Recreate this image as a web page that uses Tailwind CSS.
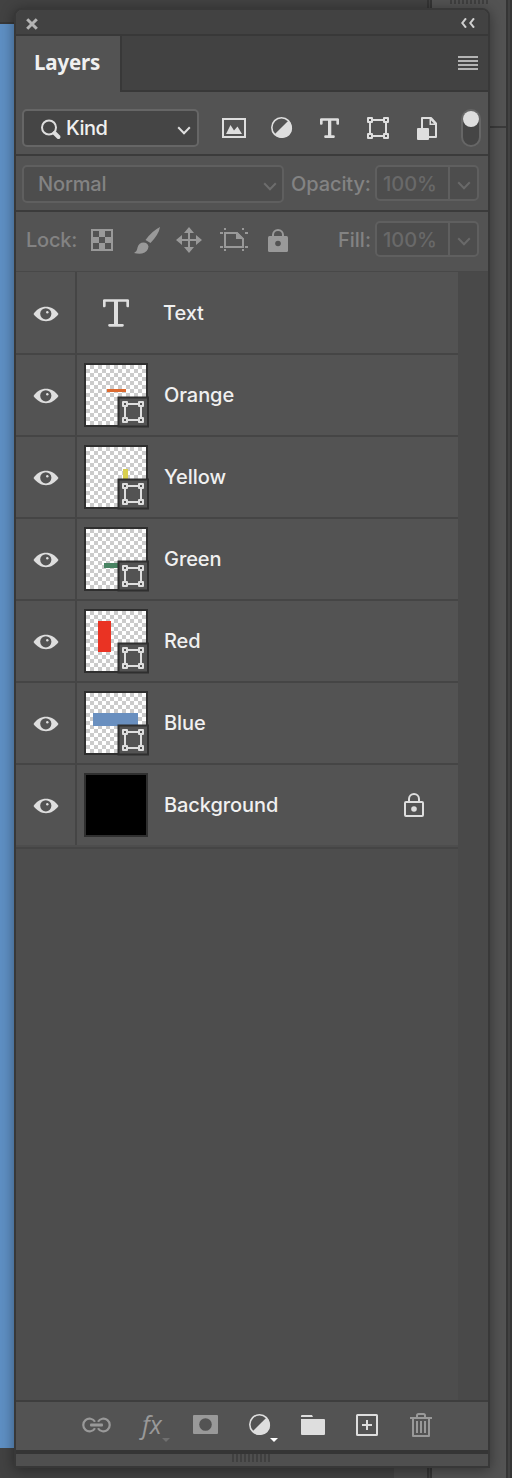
<!DOCTYPE html>
<html lang="en">
<head>
<meta charset="utf-8">
<title>Layers</title>
<script src="https://cdn.jsdelivr.net/npm/@tailwindcss/browser@4"></script>
</head>
<body class="relative h-[1478px] w-[512px] overflow-hidden bg-[#424242] text-[20px] font-medium" style="font-family:Inter,'Liberation Sans',sans-serif">

<!-- shared symbols -->
<svg class="absolute h-0 w-0">
  <symbol id="eye" viewBox="0 0 26 16">
    <path d="M.5 8C4 3.300 8 .8 13 .8S22 3.300 25.500 8C22 12.700 18 15.200 13 15.200S4 12.700.5 8Z" fill="#dedede"/>
    <circle cx="12.800" cy="7.800" r="5.600" fill="#535353"/><circle cx="14.300" cy="6.200" r="1.200" fill="#dedede"/>
  </symbol>
  <symbol id="shape" viewBox="0 0 22 22">
    <g fill="none" stroke="#dedede" stroke-width="2"><path d="M6 3H16M6 19H16M3 6V16M19 6V16"/><path d="M1 1H5V5H1ZM17 1H21V5H17ZM1 17H5V21H1ZM17 17H21V21H17Z" stroke-linejoin="round"/></g>
  </symbol>
  <symbol id="contrast" viewBox="0 0 22 22">
    <circle cx="10.500" cy="10.500" r="9.700" fill="none" stroke="#dedede" stroke-width="1.600"/><path d="M17.300 3.700A9.700 9.700 0 1 1 3.700 17.300Z" fill="#dedede"/>
  </symbol>
  <symbol id="typeT" viewBox="0 0 26 28">
    <path d="M1.300 7V1.500H24.700V7M6.500 26.300H19.500" fill="none" stroke="#dedede" stroke-width="2.700" stroke-linecap="round" stroke-linejoin="round"/><path d="M11 2H15V26H11Z" fill="#dedede"/>
  </symbol>
  <symbol id="chev" viewBox="0 0 14 9">
    <path d="M1.200 1.200 7 7.200 12.800 1.200" fill="none" stroke="currentColor" stroke-width="2"/>
  </symbol>
  <pattern id="checks" width="8" height="8" patternUnits="userSpaceOnUse"><path d="M0 0H8V8H0Z" fill="#fff"/><path d="M4 0H8V4H4ZM0 4H4V8H0Z" fill="#cbcbcb"/></pattern>
</svg>

<!-- workspace behind the panel -->
<div class="absolute inset-0 flex">
  <div class="flex w-[427px] flex-col">
    <div class="h-[22px]"></div>
    <div class="h-[1426px] border-t-2 border-[#383838] bg-[#5e8fc3]"></div>
    <div class="ml-[394px] mt-5 h-[10px] bg-[#4a4a4a]"></div>
  </div>
  <div class="w-[5px] border-x-2 border-[#353535] bg-[#424242]"></div>
  <div class="w-[74px] bg-[#535353]">
    <div class="ml-[18px] h-1 w-[38px] bg-[repeating-linear-gradient(90deg,#404040_0_2px,#535353_2px_4px)]"></div>
    <div class="mt-[122px] h-[2px] bg-[#3b3b3b]"></div>
  </div>
  <div class="w-1 border-l-2 border-[#353535] bg-[#424242]"></div>
  <div class="w-[2px] bg-[#353535]"></div>
</div>

<!-- panel -->
<div class="absolute left-[14px] top-2 flex h-[1460px] w-[476px] flex-col overflow-hidden rounded-t-[8px] border-2 border-[#383838] bg-[#535353] shadow-[0_2px_14px_rgba(0,0,0,0.4)]">
  <div class="flex h-[26px] shrink-0 items-center justify-between border-b-2 border-[#383838] bg-[#424242] pl-[10px] pr-[13px]">
    <svg class="mt-1 h-3 w-3" viewBox="0 0 12 12"><path d="M1.200 1.200 10.800 10.800M10.800 1.200 1.200 10.800" stroke="#b4b4b4" stroke-width="3"/></svg>
    <svg class="mt-[2px] h-[10px] w-[14px]" viewBox="0 0 14 10"><path d="M5 .3 1.300 5 5 9.700M13 .3 9.300 5 13 9.700" fill="none" stroke="#d0d0d0" stroke-width="2"/></svg>
  </div>
  <div class="flex h-14 shrink-0">
    <div class="w-[106px] border-r-2 border-[#383838] pl-[18px] pt-[12px] text-[20.500px] leading-[28px] font-bold tracking-[-0.150px] text-[#f0f0f0]" style="font-family:'Noto Sans',sans-serif">Layers</div>
    <div class="flex flex-1 justify-end border-b-2 border-[#383838] bg-[#424242] pr-[10px] pt-5">
      <div class="h-[14px] w-5 bg-[repeating-linear-gradient(180deg,#b4b4b4_0_2px,#424242_2px_4px)]"></div>
    </div>
  </div>

  <!-- filter row -->
  <div class="flex h-16 shrink-0 items-start border-b-2 border-[#3b3b3b] pl-[6px] pt-[17px]">
    <div class="flex h-[38px] w-[177px] items-center rounded-[5px] border-2 border-[#666] bg-[#454545] pl-[17px] pr-[6px] text-[#f0f0f0]">
      <svg class="mt-[2px] h-[21px] w-[21px]" viewBox="0 0 21 21"><circle cx="8" cy="8.500" r="7" fill="none" stroke="#dedede" stroke-width="2"/><path d="m13.500 14 4 4" stroke="#dedede" stroke-width="4" stroke-linecap="round"/></svg>
      <span class="ml-1 flex-1 tracking-[-0.500px]">Kind</span>
      <svg class="mt-1 h-[9px] w-[14px] text-[#dedede]"><use href="#chev"/></svg>
    </div>
    <div class="ml-[23px] flex h-[38px] items-center">
      <svg class="h-5 w-6" viewBox="0 0 24 20"><path d="M1 1H23V19H1Z" fill="none" stroke="#dedede" stroke-width="2"/><path d="M4 16 8.500 7 12 12.500 15.500 8.500 20 16Z" fill="#dedede"/></svg>
      <svg class="ml-[25px] h-[22px] w-[22px]"><use href="#contrast"/></svg>
      <svg class="ml-[27px] h-5 w-[19px]" viewBox="0 0 19 20"><path d="M1.300 5.500V1.500H17.700V5.500M5.500 18.700H13.500" fill="none" stroke="#dedede" stroke-width="2.700" stroke-linecap="round" stroke-linejoin="round"/><path d="M8 1H11.300V19H8Z" fill="#dedede"/></svg>
      <svg class="ml-7 h-[22px] w-[22px]"><use href="#shape"/></svg>
      <svg class="ml-7 mt-[1px] h-[23px] w-5" viewBox="0 0 20 23"><path d="M5 11V1H14L19 6.500V20H12" fill="none" stroke="#dedede" stroke-width="2" stroke-linejoin="round"/><path d="M12.500 1V8H19L19 6.500 14 1Z" fill="#dedede"/><path d="M14 3.500 17 6.500H14Z" fill="#535353"/><rect y="11" width="12" height="12" rx="1" fill="#dedede"/></svg>
    </div>
    <div class="ml-6 h-[38px] w-5 rounded-full border-2 border-[#666] bg-[#454545]"><div class="h-4 w-4 rounded-full bg-[#dedede]"></div></div>
  </div>

  <!-- blend row -->
  <div class="flex h-14 shrink-0 items-start border-b-2 border-[#3b3b3b] pl-[6px] pt-[9px] text-[#838383]">
    <div class="flex h-[38px] w-[262px] items-center justify-between rounded-[5px] border-2 border-[#5f5f5f] bg-[#4d4d4d] pl-[14px] pr-[5px]">
      <span class="tracking-[-0.150px]">Normal</span><svg class="mt-1 h-[9px] w-[14px] text-[#6d6d6d]"><use href="#chev"/></svg>
    </div>
    <div class="w-[91px] pl-[7px] leading-[38px] tracking-[-0.100px]">Opacity:</div>
    <div class="flex h-9 w-[104px] rounded-[5px] border-2 border-[#5f5f5f] bg-[#4d4d4d] text-[#696969]">
      <div class="w-[73px] border-r-2 border-[#5f5f5f] pl-[6px] leading-[34px]">100%</div>
      <svg class="ml-[7px] mt-[14px] h-[9px] w-[14px]"><use href="#chev"/></svg>
    </div>
  </div>

  <!-- lock row -->
  <div class="flex h-[60px] shrink-0 items-start border-b border-[#484848] pl-[10px] pt-[9px] text-[#838383]">
    <div class="w-[65px] leading-[38px] tracking-[-0.200px]">Lock:</div>
    <div class="flex h-[38px] items-center">
      <svg class="h-[22px] w-[22px]" viewBox="0 0 22 22"><path d="M1 1H21V21H1Z" fill="none" stroke="#999" stroke-width="2"/><path d="M8 2H14V8H8ZM2 8H8V14H2ZM14 8H20V14H14ZM8 14H14V20H8Z" fill="#999"/></svg>
      <svg class="ml-[21px] h-[27px] w-[26px]" viewBox="0 0 26 27"><path d="M26 0Q25 7 16.500 16L11.500 13Q18 4 26 0Z" fill="#999"/><path d="M9.500 15.500Q13.500 15.500 14.500 19.500 14 25 8 26.500 4 27 0 26 3 24.500 3.500 20.500 5 15.500 9.500 15.500Z" fill="#999"/></svg>
      <svg class="ml-4 h-[26px] w-[26px]" viewBox="0 0 26 26"><path d="M13 4V22M4 13H22" stroke="#999" stroke-width="2"/><path d="M13 0 18 6H8ZM13 26 18 20H8ZM0 13 6 8V18ZM26 13 20 8V18Z" fill="#999"/></svg>
      <svg class="ml-[18px] h-6 w-7" viewBox="0 0 28 24"><path d="M5 5H17L23 11V19H5Z" fill="none" stroke="#999" stroke-width="2"/><path d="M16 4V11H24L17 4Z" fill="#999"/><path d="M4 0H6V2H4ZM22 0H24V2H22ZM0 4H3V6H0ZM25 4H28V6H25ZM0 18H3V20H0ZM25 18H28V20H25ZM4 21H6V23H4ZM22 21H24V23H22Z" fill="#999"/></svg>
      <svg class="ml-5 h-[23px] w-5" viewBox="0 0 20 23"><path d="M5 8V6A5 5 0 0 1 15 6V8" fill="none" stroke="#999" stroke-width="2"/><rect y="7" width="20" height="16" rx="1.500" fill="#999"/><circle cx="10" cy="14.500" r="2.800" fill="#535353"/></svg>
    </div>
    <div class="ml-[50px] w-[37px] leading-[38px]">Fill:</div>
    <div class="flex h-9 w-[104px] rounded-[5px] border-2 border-[#5f5f5f] bg-[#4d4d4d] text-[#696969]">
      <div class="w-[73px] border-r-2 border-[#5f5f5f] pl-[6px] leading-[34px]">100%</div>
      <svg class="ml-[7px] mt-[14px] h-[9px] w-[14px]"><use href="#chev"/></svg>
    </div>
  </div>

  <!-- layer list -->
  <div class="flex flex-1 bg-[#494949]">
    <div class="w-[442px] bg-[#4d4d4d] tracking-[-0.070px] text-[#f0f0f0]">
      <div class="flex h-[83px] items-stretch border-b-2 border-[#454545] bg-[#535353]">
        <div class="flex w-[61px] items-center border-r-2 border-[#454545] pl-[17px] pt-[2px]"><svg class="h-4 w-[26px]"><use href="#eye"/></svg></div>
        <div class="flex flex-1 items-center"><svg class="ml-[26px] mt-[1px] h-7 w-[26px]"><use href="#typeT"/></svg><span class="ml-[34px] mt-[1px]">Text</span></div>
      </div>
      <div class="flex h-[82px] border-b-2 border-[#454545] bg-[#535353]">
        <div class="flex w-[61px] items-center border-r-2 border-[#454545] pl-[17px] pt-[1px]"><svg class="h-4 w-[26px]"><use href="#eye"/></svg></div>
        <div class="flex flex-1 items-center"><svg class="ml-[7px] mt-[2px] h-[66px] w-[66px]" viewBox="0 0 66 66"><path d="M1 1H63V63H1Z" fill="#2f2f2f" stroke="#2f2f2f" stroke-width="2"/><svg x="2" y="2" width="60" height="60"><rect width="60" height="60" fill="url(#checks)"/><rect x="21" y="24" width="19" height="3" fill="#dc6a30"/></svg><path d="M34.500 34.500H64V63.500H34.500Z" fill="#535353" stroke="#2f2f2f" stroke-width="2"/><use href="#shape" x="38" y="38" width="22" height="22"/></svg><span class="ml-[14px]">Orange</span></div>
      </div>
      <div class="flex h-[82px] border-b-2 border-[#454545] bg-[#535353]">
        <div class="flex w-[61px] items-center border-r-2 border-[#454545] pl-[17px] pt-[1px]"><svg class="h-4 w-[26px]"><use href="#eye"/></svg></div>
        <div class="flex flex-1 items-center"><svg class="ml-[7px] mt-[2px] h-[66px] w-[66px]" viewBox="0 0 66 66"><path d="M1 1H63V63H1Z" fill="#2f2f2f" stroke="#2f2f2f" stroke-width="2"/><svg x="2" y="2" width="60" height="60"><rect width="60" height="60" fill="url(#checks)"/><rect x="37" y="22" width="5" height="12" fill="#d8cf4e"/></svg><path d="M34.500 34.500H64V63.500H34.500Z" fill="#535353" stroke="#2f2f2f" stroke-width="2"/><use href="#shape" x="38" y="38" width="22" height="22"/></svg><span class="ml-[14px]">Yellow</span></div>
      </div>
      <div class="flex h-[82px] border-b-2 border-[#454545] bg-[#535353]">
        <div class="flex w-[61px] items-center border-r-2 border-[#454545] pl-[17px] pt-[1px]"><svg class="h-4 w-[26px]"><use href="#eye"/></svg></div>
        <div class="flex flex-1 items-center"><svg class="ml-[7px] mt-[2px] h-[66px] w-[66px]" viewBox="0 0 66 66"><path d="M1 1H63V63H1Z" fill="#2f2f2f" stroke="#2f2f2f" stroke-width="2"/><svg x="2" y="2" width="60" height="60"><rect width="60" height="60" fill="url(#checks)"/><rect x="18" y="34" width="16" height="5" fill="#488362"/></svg><path d="M34.500 34.500H64V63.500H34.500Z" fill="#535353" stroke="#2f2f2f" stroke-width="2"/><use href="#shape" x="38" y="38" width="22" height="22"/></svg><span class="ml-[14px]">Green</span></div>
      </div>
      <div class="flex h-[82px] border-b-2 border-[#454545] bg-[#535353]">
        <div class="flex w-[61px] items-center border-r-2 border-[#454545] pl-[17px] pt-[1px]"><svg class="h-4 w-[26px]"><use href="#eye"/></svg></div>
        <div class="flex flex-1 items-center"><svg class="ml-[7px] mt-[2px] h-[66px] w-[66px]" viewBox="0 0 66 66"><path d="M1 1H63V63H1Z" fill="#2f2f2f" stroke="#2f2f2f" stroke-width="2"/><svg x="2" y="2" width="60" height="60"><rect width="60" height="60" fill="url(#checks)"/><rect x="12" y="10" width="13" height="31" fill="#ea3323"/></svg><path d="M34.500 34.500H64V63.500H34.500Z" fill="#535353" stroke="#2f2f2f" stroke-width="2"/><use href="#shape" x="38" y="38" width="22" height="22"/></svg><span class="ml-[14px]">Red</span></div>
      </div>
      <div class="flex h-[82px] border-b-2 border-[#454545] bg-[#535353]">
        <div class="flex w-[61px] items-center border-r-2 border-[#454545] pl-[17px] pt-[1px]"><svg class="h-4 w-[26px]"><use href="#eye"/></svg></div>
        <div class="flex flex-1 items-center"><svg class="ml-[7px] mt-[2px] h-[66px] w-[66px]" viewBox="0 0 66 66"><path d="M1 1H63V63H1Z" fill="#2f2f2f" stroke="#2f2f2f" stroke-width="2"/><svg x="2" y="2" width="60" height="60"><rect width="60" height="60" fill="url(#checks)"/><rect x="7" y="20" width="45" height="13" fill="#698fbf"/></svg><path d="M34.500 34.500H64V63.500H34.500Z" fill="#535353" stroke="#2f2f2f" stroke-width="2"/><use href="#shape" x="38" y="38" width="22" height="22"/></svg><span class="ml-[14px]">Blue</span></div>
      </div>
      <div class="flex h-[82px] border-b-2 border-[#4d4d4d] bg-[#535353]">
        <div class="flex w-[61px] items-center border-r-2 border-[#454545] pl-[17px] pt-[1px]"><svg class="h-4 w-[26px]"><use href="#eye"/></svg></div>
        <div class="flex flex-1 items-center"><div class="ml-[7px] h-16 w-16 border-2 border-[#2f2f2f] bg-black"></div><span class="ml-4">Background</span>
          <svg class="ml-auto mr-[34px] h-6 w-5" viewBox="0 0 20 24"><path d="M5 8V6A5 5 0 0 1 15 6V8" fill="none" stroke="#dedede" stroke-width="2"/><rect x="1" y="9" width="18" height="14" rx="1" fill="none" stroke="#dedede" stroke-width="2"/><circle cx="10" cy="16" r="2.800" fill="#dedede"/></svg>
        </div>
      </div>
      <div class="h-[2px] bg-[#454545]"></div>
    </div>
  </div>

  <!-- footer buttons -->
  <div class="flex h-[50px] shrink-0 items-start border-t-2 border-[#3e3e3e] pl-[66px] pt-[10px]">
    <svg class="mt-[5px] h-4 w-[29px]" viewBox="0 0 29 16"><g fill="none" stroke="#999" stroke-width="2.200"><path d="M13 4.800A6.300 6.300 0 1 0 13 11.200M16 4.800A6.300 6.300 0 1 1 16 11.200"/></g><rect x="8" y="6.500" width="13" height="3" rx="1" fill="#999"/></svg>
    <div class="ml-[28px] flex h-8 w-[34px] items-end text-[#999]">
      <span class="mb-1 inline-block w-6 pl-[3px] text-[25px] leading-8 font-normal italic" style="font-family:'Open Sans',sans-serif">fx</span>
      <svg class="-ml-[1px] mb-[2px] h-1 w-2 shrink-0" viewBox="0 0 8 4"><path d="M0 0H8L4 4Z" fill="#6f6f6f"/></svg>
    </div>
    <svg class="ml-5 mt-[3px] h-[19px] w-[25px]" viewBox="0 0 25 19"><rect width="25" height="19" rx="1" fill="#999"/><circle cx="12.500" cy="9.500" r="6.300" fill="#535353"/></svg>
    <div class="ml-[31px] flex w-[29px] flex-col pt-[2px]"><svg class="h-[22px] w-[22px]"><use href="#contrast"/></svg><svg class="ml-[21px] mt-[2px] h-1 w-2" viewBox="0 0 8 4"><path d="M0 0H8L4 4Z" fill="#fff"/></svg></div>
    <svg class="ml-[23px] mt-[3px] h-5 w-6" viewBox="0 0 24 20"><path d="M0 2V1Q0 0 1 0H11L12 2ZM0 4H23Q24 4 24 5V19Q24 20 23 20H1Q0 20 0 19Z" fill="#dedede"/></svg>
    <svg class="ml-[31px] mt-[2px] h-[22px] w-[22px]" viewBox="0 0 22 22"><rect x="1" y="1" width="20" height="20" rx=".5" fill="none" stroke="#dedede" stroke-width="2"/><path d="M11 6V16M6 11H16" stroke="#dedede" stroke-width="2"/></svg>
    <svg class="ml-8 mt-[1px] h-6 w-[22px]" viewBox="0 0 22 24"><path d="M0 5H22M7 5V2.500Q7 1 8.500 1H13.500Q15 1 15 2.500V5M3 5V23H19V5M7 8V20M11 8V20M15 8V20" fill="none" stroke="#999" stroke-width="2" stroke-linejoin="round"/></svg>
  </div>
  <div class="h-1 shrink-0 bg-[#353535]"></div>
  <div class="flex h-3 shrink-0 bg-[#4f4f4f]"><div class="ml-[216px] h-2 w-[38px] bg-[repeating-linear-gradient(90deg,#404040_0_2px,#4f4f4f_2px_4px)]"></div></div>
</div>
</body>
</html>
